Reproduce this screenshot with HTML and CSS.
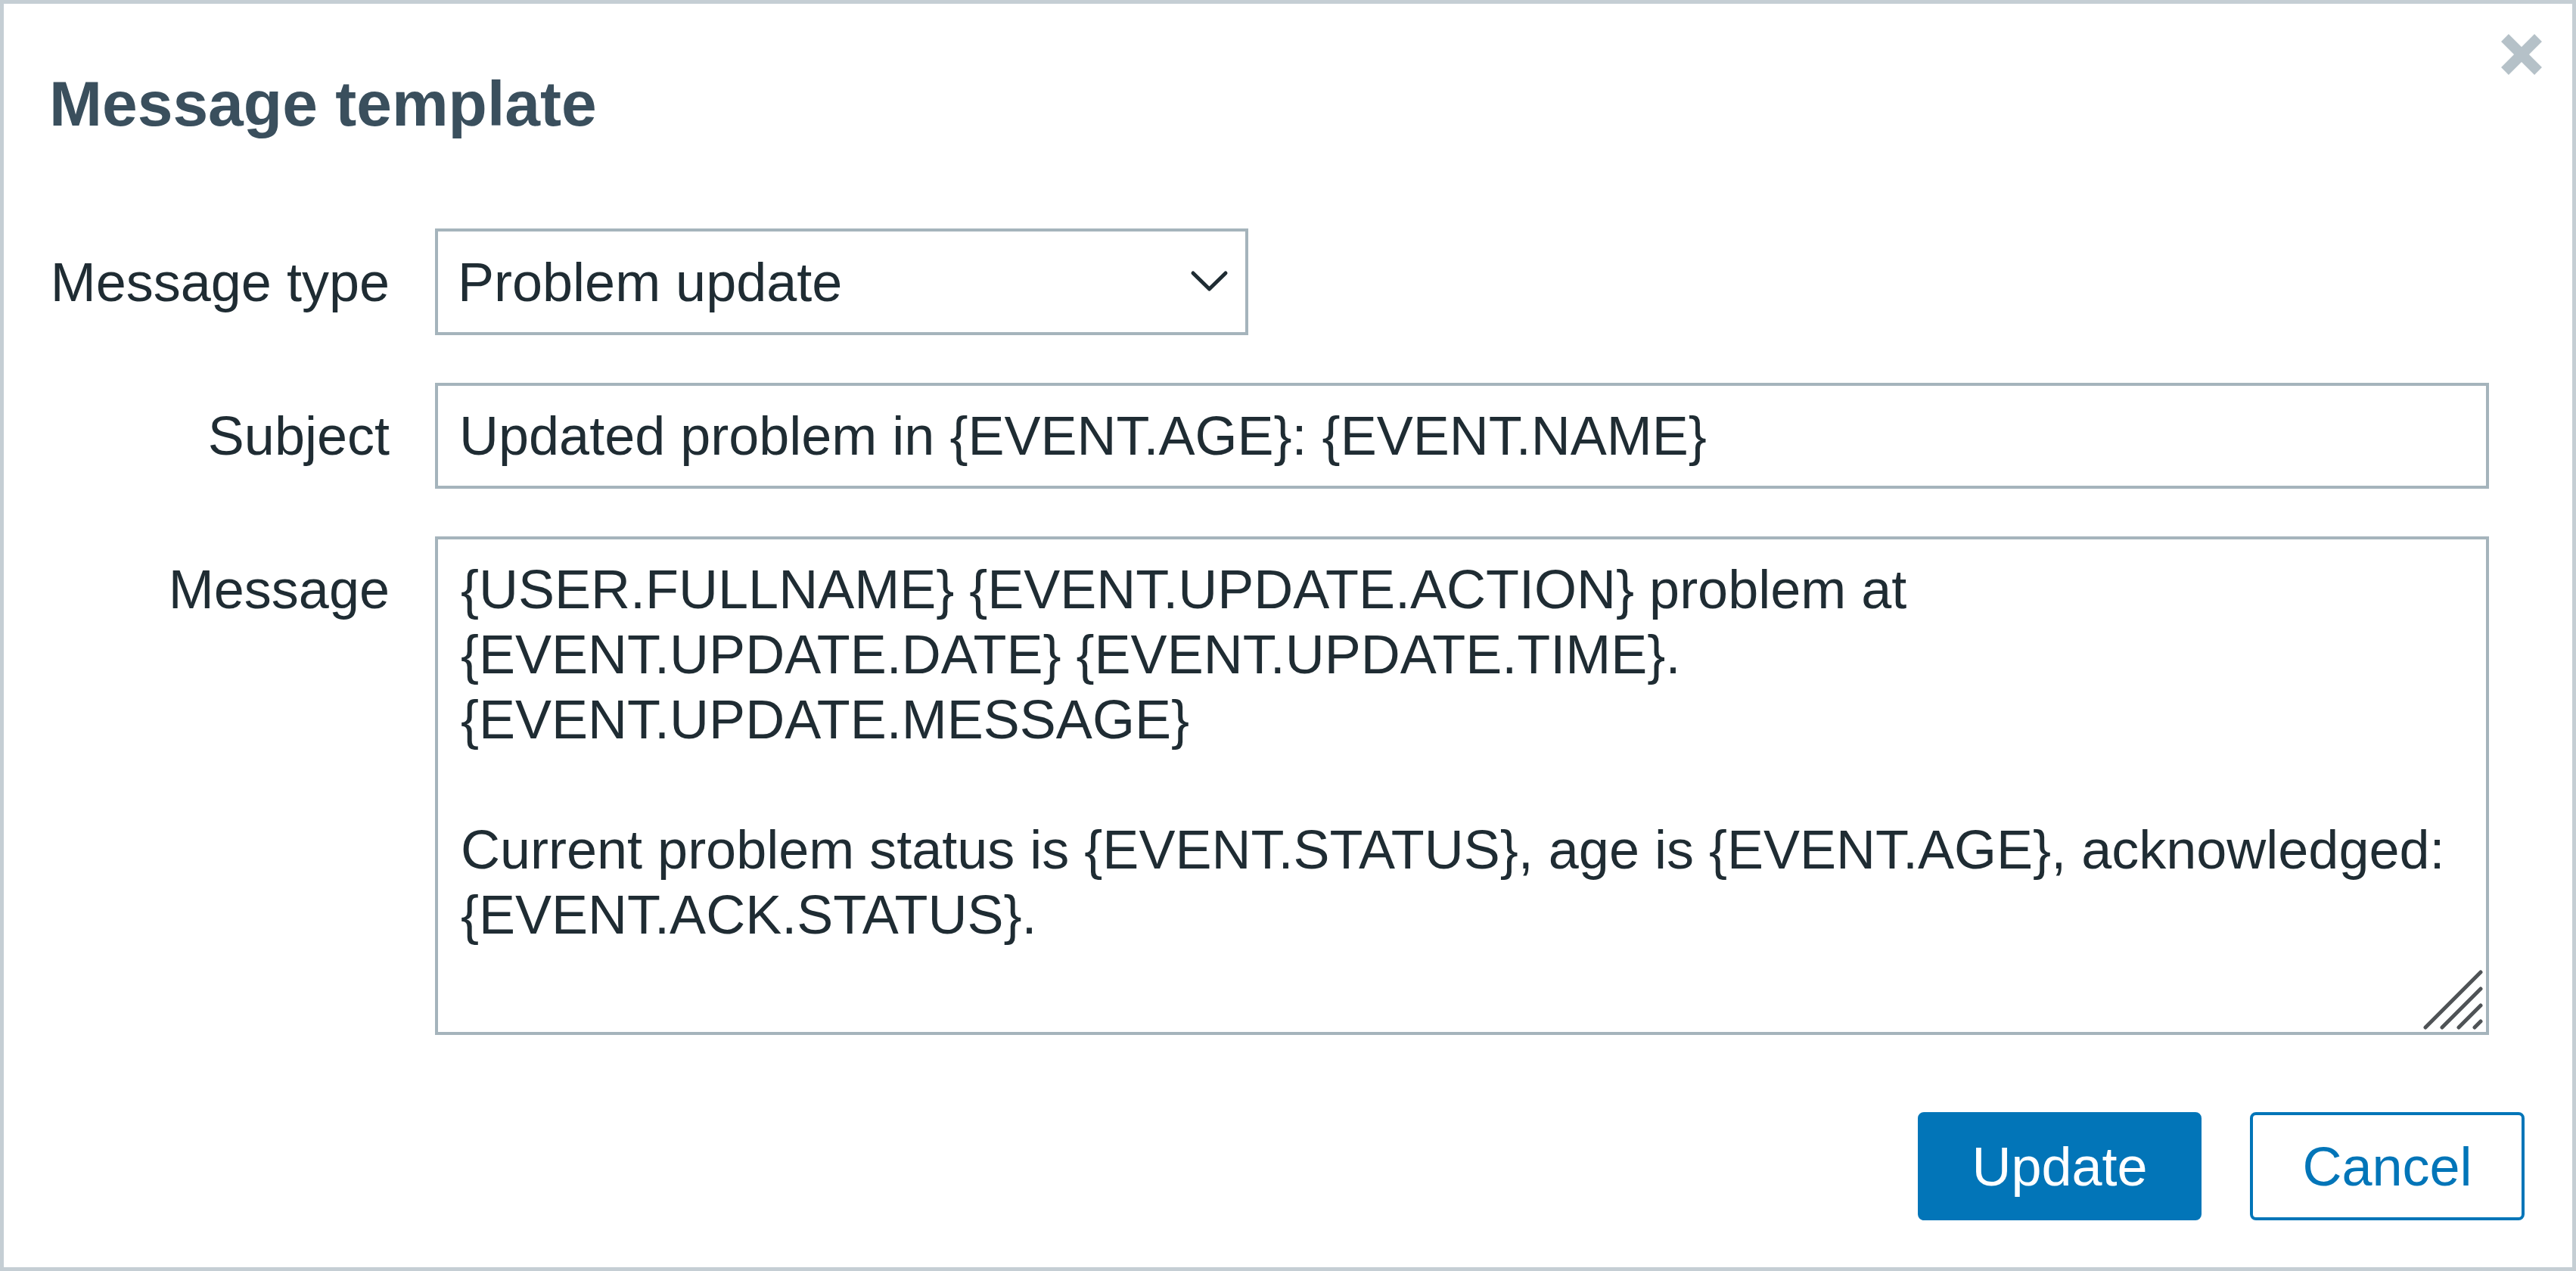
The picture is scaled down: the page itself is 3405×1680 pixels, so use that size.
FILE: index.html
```html
<!DOCTYPE html>
<html lang="en">
<head>
<meta charset="utf-8">
<title>Message template</title>
<link rel="stylesheet" href="styles.css">
</head>
<body>
<div class="dialog">
  <button class="close" type="button" aria-label="Close">
    <svg viewBox="0 0 54 54" width="54" height="54"><line x1="5" y1="5" x2="49" y2="49"/><line x1="49" y1="5" x2="5" y2="49"/></svg>
  </button>
  <h1 class="title">Message template</h1>
  <form class="form">
    <label class="label">Message type</label>
    <div class="select-wrap">
      <select class="select"><option>Problem update</option></select>
      <svg class="chevron" viewBox="0 0 51 29" width="51" height="29"><polyline points="4,4 25.5,25 47,4"/></svg>
    </div>
    <label class="label">Subject</label>
    <input class="input" type="text" value="Updated problem in {EVENT.AGE}: {EVENT.NAME}">
    <label class="label label-top">Message</label>
    <div class="textarea-wrap">
      <textarea class="textarea">{USER.FULLNAME} {EVENT.UPDATE.ACTION} problem at
{EVENT.UPDATE.DATE} {EVENT.UPDATE.TIME}.
{EVENT.UPDATE.MESSAGE}

Current problem status is {EVENT.STATUS}, age is {EVENT.AGE}, acknowledged:
{EVENT.ACK.STATUS}.</textarea>
      <svg class="grip" viewBox="0 0 80 80" width="80" height="80"><line x1="4" y1="77" x2="77" y2="4"/><line x1="26" y1="77" x2="77" y2="26"/><line x1="48" y1="77" x2="77" y2="48"/><line x1="69" y1="77" x2="77" y2="69"/></svg>
    </div>
  </form>
  <div class="footer">
    <button class="btn btn-primary" type="button">Update</button>
    <button class="btn btn-secondary" type="button">Cancel</button>
  </div>
</div>
</body>
</html>
```
FILE: styles.css
```css
html, body {
  margin: 0;
  padding: 0;
}

body {
  width: 3405px;
  height: 1680px;
  overflow: hidden;
  background: #ffffff;
  font-family: "Liberation Sans", Arial, Helvetica, sans-serif;
  color: #1f2c33;
}

.dialog {
  position: relative;
  box-sizing: border-box;
  width: 3405px;
  height: 1680px;
  border: 5px solid #c5ced4;
  padding: 84px 63px 0 60px;
  display: flex;
  flex-direction: column;
  background: #ffffff;
}

.close {
  position: absolute;
  top: 40px;
  right: 40px;
  width: 54px;
  height: 54px;
  padding: 0;
  margin: 0;
  border: 0;
  background: none;
}

.close svg {
  display: block;
}

.close line {
  stroke: #b5c1c8;
  stroke-width: 14;
  stroke-linecap: butt;
}

.title {
  margin: 0;
  font-size: 84px;
  font-weight: bold;
  line-height: 96px;
  color: #3a4f5d;
}

.form {
  display: grid;
  grid-template-columns: 450px 2715px;
  column-gap: 60px;
  row-gap: 63px;
  margin-top: 117px;
  align-items: center;
}

.label {
  font-size: 72px;
  line-height: 86px;
  text-align: right;
  color: #1f2c33;
}

.label-top {
  align-self: start;
  padding-top: 27px;
}

.select-wrap {
  position: relative;
  width: 1075px;
  height: 141px;
}

.select {
  -webkit-appearance: none;
  appearance: none;
  display: block;
  box-sizing: border-box;
  width: 100%;
  height: 100%;
  margin: 0;
  padding: 0 0 0 26px;
  border: 4px solid #a5b4bc;
  border-radius: 0;
  background: #ffffff;
  font-family: "Liberation Sans", Arial, Helvetica, sans-serif;
  font-size: 72px;
  color: #1f2c33;
  outline: none;
}

.chevron {
  position: absolute;
  left: 998px;
  top: 55px;
  pointer-events: none;
}

.chevron polyline {
  fill: none;
  stroke: #1f2c33;
  stroke-width: 5;
  stroke-linecap: round;
  stroke-linejoin: round;
}

.input {
  display: block;
  box-sizing: border-box;
  width: 100%;
  height: 140px;
  margin: 0;
  padding: 0 28px;
  border: 4px solid #a5b4bc;
  border-radius: 0;
  background: #ffffff;
  font-family: "Liberation Sans", Arial, Helvetica, sans-serif;
  font-size: 72px;
  color: #1f2c33;
  outline: none;
}

.textarea-wrap {
  position: relative;
  height: 659px;
}

.textarea {
  display: block;
  box-sizing: border-box;
  width: 100%;
  height: 100%;
  margin: 0;
  padding: 23px 30px;
  border: 4px solid #a5b4bc;
  border-radius: 0;
  background: #ffffff;
  font-family: "Liberation Sans", Arial, Helvetica, sans-serif;
  font-size: 72px;
  line-height: 86px;
  color: #1f2c33;
  white-space: pre;
  overflow: hidden;
  resize: none;
  outline: none;
}

.grip {
  position: absolute;
  right: 8px;
  bottom: 7px;
  pointer-events: none;
}

.grip line {
  stroke: #4f5356;
  stroke-width: 5;
  stroke-linecap: round;
}

.footer {
  display: flex;
  justify-content: flex-end;
  gap: 64px;
  margin-top: 102px;
}

.btn {
  box-sizing: border-box;
  height: 143px;
  margin: 0;
  padding: 0;
  border: 4px solid #0275b8;
  border-radius: 8px;
  font-family: "Liberation Sans", Arial, Helvetica, sans-serif;
  font-size: 72px;
}

.btn-primary {
  width: 375px;
  background: #0275b8;
  color: #ffffff;
}

.btn-secondary {
  width: 363px;
  background: #ffffff;
  color: #0275b8;
}
```
